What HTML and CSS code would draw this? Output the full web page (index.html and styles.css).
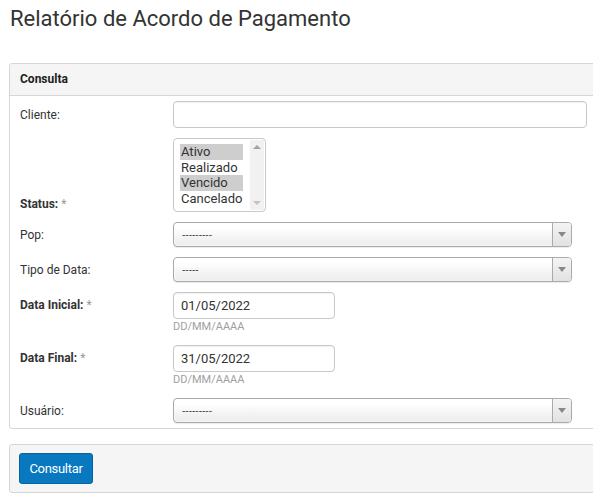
FILE: index.html
```html
<!DOCTYPE html>
<html lang="pt-BR">
<head>
<meta charset="utf-8">
<title>Relatório de Acordo de Pagamento</title>
<link rel="stylesheet" href="styles.css">
</head>
<body>
<div class="page">
  <h1 class="title">Relatório de Acordo de Pagamento</h1>

  <div class="panel">
    <div class="panel-head">Consulta</div>
    <div class="panel-body">
      <div class="row">
        <label class="lbl">Cliente:</label>
        <input class="text-input wide" type="text">
      </div>

      <div class="row row-end">
        <label class="lbl bold">Status: <span class="req">*</span></label>
        <div class="listbox">
          <div class="options">
            <div class="opt sel">Ativo</div>
            <div class="opt">Realizado</div>
            <div class="opt sel">Vencido</div>
            <div class="opt">Cancelado</div>
          </div>
          <div class="scrollbar">
            <span class="sb-up"></span>
            <span class="sb-down"></span>
          </div>
        </div>
      </div>

      <div class="row">
        <label class="lbl">Pop:</label>
        <div class="select"><span class="sel-text">---------</span><span class="sel-arrow"><b></b></span></div>
      </div>

      <div class="row">
        <label class="lbl">Tipo de Data:</label>
        <div class="select"><span class="sel-text">-----</span><span class="sel-arrow"><b></b></span></div>
      </div>

      <div class="row row-top">
        <label class="lbl bold lbl-tall">Data Inicial: <span class="req">*</span></label>
        <div class="field">
          <input class="text-input date" type="text" value="01/05/2022">
          <div class="help">DD/MM/AAAA</div>
        </div>
      </div>

      <div class="row row-top">
        <label class="lbl bold lbl-tall">Data Final: <span class="req">*</span></label>
        <div class="field">
          <input class="text-input date" type="text" value="31/05/2022">
          <div class="help">DD/MM/AAAA</div>
        </div>
      </div>

      <div class="row">
        <label class="lbl">Usuário:</label>
        <div class="select"><span class="sel-text">---------</span><span class="sel-arrow"><b></b></span></div>
      </div>
    </div>
  </div>

  <div class="panel footer">
    <button class="btn" type="button">Consultar</button>
  </div>
</div>
</body>
</html>
```

FILE: styles.css
```css
html, body {
  margin: 0;
  padding: 0;
  background: #fff;
  overflow: hidden;
}

body {
  font-family: Roboto, "Liberation Sans", Arial, sans-serif;
  color: #333;
  font-size: 12px;
}

.page {
  width: 600px;
  padding: 5px 0 0 9px;
}

.title {
  margin: 0 0 0 1px;
  font-size: 22px;
  font-weight: 400;
  line-height: 28px;
  color: #333;
  height: 58px;
}

.panel {
  border: 1px solid #d6d6d6;
  border-radius: 3px;
  background: #fff;
  width: 600px;
  box-sizing: border-box;
}

.panel-head {
  height: 31px;
  line-height: 31px;
  background: #f5f5f5;
  border-bottom: 1px solid #d6d6d6;
  padding-left: 10px;
  font-weight: 700;
  font-size: 12px;
  color: #222;
  border-radius: 3px 3px 0 0;
}

.panel-body {
  padding: 5px 0 5px 10px;
  display: flex;
  flex-direction: column;
  gap: 10px;
}

.row {
  display: flex;
  align-items: center;
}

.row-end {
  align-items: flex-end;
}

.row-top {
  align-items: flex-start;
}

.lbl {
  width: 153px;
  flex: none;
  font-size: 12px;
  color: #333;
}

.row-end .lbl {
  padding-bottom: 1px;
}

.lbl-tall {
  line-height: 27px;
}

.bold {
  font-weight: 700;
}

.req {
  font-weight: 400;
  color: #999;
}

.text-input {
  box-sizing: border-box;
  height: 27px;
  border: 1px solid #c8c8c8;
  border-radius: 4px;
  box-shadow: inset 0 1px 1px rgba(0, 0, 0, 0.06);
  padding: 0 7px;
  font-family: inherit;
  font-size: 13px;
  color: #333;
  margin: 0;
  outline: none;
}

.wide {
  width: 414px;
}

.date {
  width: 162px;
}

.field {
  display: flex;
  flex-direction: column;
}

.help {
  height: 16px;
  line-height: 15px;
  font-size: 11px;
  color: #a0a0a0;
}

.listbox {
  box-sizing: border-box;
  width: 93px;
  height: 74px;
  border: 1px solid #c8c8c8;
  border-radius: 4px;
  display: flex;
  overflow: hidden;
  background: #fff;
}

.options {
  flex: 1;
  padding: 5px 0 0 6px;
}

.opt {
  font-size: 13px;
  line-height: 15.5px;
  height: 15.5px;
  padding-left: 1px;
  width: 62px;
  color: #333;
}

.opt.sel {
  background: #cecece;
}

.scrollbar {
  width: 14px;
  margin: 1px 1px 1px 0;
  background: #f1f1f1;
  position: relative;
}

.sb-up, .sb-down {
  position: absolute;
  left: 3px;
  width: 0;
  height: 0;
  border-left: 4px solid transparent;
  border-right: 4px solid transparent;
}

.sb-up {
  top: 5px;
  border-bottom: 4px solid #a3a3a3;
}

.sb-down {
  bottom: 5px;
  border-top: 4px solid #c4c4c4;
}

.select {
  box-sizing: border-box;
  width: 399px;
  height: 25px;
  border: 1px solid #aaa;
  border-radius: 4px;
  background: linear-gradient(#ffffff 20%, #f2f2f2 70%, #ececec 100%);
  display: flex;
  align-items: center;
  box-shadow: 0 0 3px #fff inset, 0 1px 1px rgba(0, 0, 0, 0.08);
}

.sel-text {
  flex: 1;
  padding-left: 8px;
  font-family: "Liberation Sans", Arial, sans-serif;
  font-size: 10px;
  color: #444;
}

.sel-arrow {
  width: 18px;
  height: 100%;
  border-left: 1px solid #aaa;
  background: linear-gradient(#f4f4f4, #e2e2e2);
  border-radius: 0 3px 3px 0;
  display: flex;
  align-items: center;
  justify-content: center;
}

.sel-arrow b {
  width: 0;
  height: 0;
  border-left: 4px solid transparent;
  border-right: 4px solid transparent;
  border-top: 5px solid #888;
}

.footer {
  margin-top: 15px;
  background: #f5f5f5;
  padding: 8px 0 8px 9px;
}

.btn {
  box-sizing: border-box;
  width: 74px;
  height: 31px;
  background: #0878c1;
  border: 1px solid #05649f;
  border-radius: 3px;
  color: #fff;
  font-family: inherit;
  font-size: 13px;
  letter-spacing: -0.3px;
  padding: 0;
  cursor: pointer;
}
```
